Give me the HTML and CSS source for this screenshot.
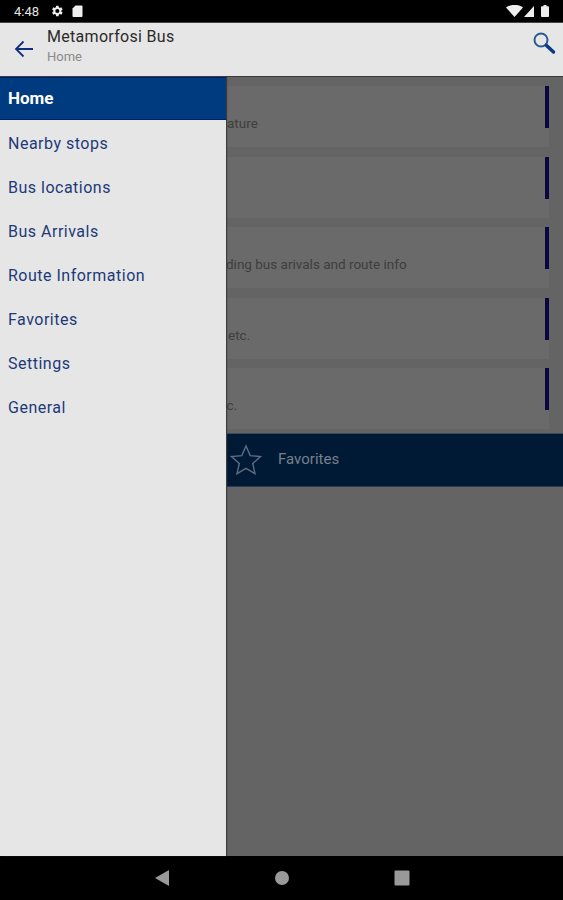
FILE: index.html
```html
<!DOCTYPE html>
<html lang="en">
<head>
  <meta charset="UTF-8" />
  <title>Metamorfosi Bus</title>
  <link rel="stylesheet" href="styles.css">
</head>
<body>
  <div class="status-bar">
    <div class="status-left">
      <span class="clock">4:48</span>
      <svg class="status-gear" width="14" height="14" viewBox="0 0 24 24"><path d="M19.4 13a7.5 7.5 0 0 0 0-2l2.2-1.7-2.1-3.6-2.6 1a7.6 7.6 0 0 0-1.8-1L14.700 3h-4.200l-.4 2.700a7.600 7.600 0 0 0-1.800 1l-2.600-1-2.100 3.600L5.800 11a7.500 7.500 0 0 0 0 2l-2.200 1.700 2.100 3.600 2.600-1a7.600 7.600 0 0 0 1.800 1l.4 2.700h4.200l.4-2.700a7.600 7.600 0 0 0 1.800-1l2.600 1 2.100-3.600zM12.600 15.500a3.500 3.500 0 1 1 0-7 3.500 3.500 0 0 1 0 7z"/></svg>
      <svg class="status-card" width="11" height="12" viewBox="0 0 11 12"><path d="M3.500 0.500H9.500a1 1 0 0 1 1 1v9.500a1 1 0 0 1-1 1h-8a1 1 0 0 1-1-1V3.500z"/></svg>
    </div>
    <div class="status-right">
      <svg width="17" height="12" viewBox="0 0 17 12"><path d="M0 2.500C5-1 12-1 17 2.500L8.500 12z"/></svg>
      <svg width="10" height="11" viewBox="0 0 10 11"><path d="M10 0V11H0z"/></svg>
      <svg class="status-battery" width="8" height="12" viewBox="0 0 8 12"><path d="M2.500 0h3v1.200H7a1 1 0 0 1 1 1V11a1 1 0 0 1-1 1H1a1 1 0 0 1-1-1V2.200a1 1 0 0 1 1-1h1.500z"/></svg>
    </div>
  </div>

  <header class="app-bar">
    <svg class="back-icon" width="20" height="18" viewBox="0 0 20 18"><path d="M19 9H2M9.500 1.500L2 9l7.500 7.500"/></svg>
    <div class="app-title">
      <div class="app-name">Metamorfosi Bus</div>
      <div class="app-page">Home</div>
    </div>
    <svg class="search-icon" width="24" height="24" viewBox="0 0 24 24"><circle cx="9" cy="9" r="6.500"/><path class="search-handle" d="M14.500 14.500L21.500 21"/></svg>
  </header>

  <main class="content">
    <div class="cards">
      <div class="card"><span class="card-text card-first">ature</span><span class="card-bar"></span></div>
      <div class="card"><span class="card-text"></span><span class="card-bar"></span></div>
      <div class="card"><span class="card-text">ding bus arivals and route info</span><span class="card-bar"></span></div>
      <div class="card"><span class="card-text card-etc">etc.</span><span class="card-bar"></span></div>
      <div class="card"><span class="card-text card-last">tc.</span><span class="card-bar"></span></div>
    </div>
    <div class="favorites-bar">
      <svg width="32" height="31" viewBox="0 0 32 31"><path d="M16 2l4.200 9.600 10.300 1-7.800 6.900 2.300 10.200L16 24.400l-9 5.300 2.300-10.200-7.800-6.900 10.300-1z"/></svg>
      <span class="favorites-label">Favorites</span>
    </div>

    <nav class="drawer">
      <div class="drawer-item active">Home</div>
      <div class="drawer-item">Nearby stops</div>
      <div class="drawer-item">Bus locations</div>
      <div class="drawer-item">Bus Arrivals</div>
      <div class="drawer-item">Route Information</div>
      <div class="drawer-item">Favorites</div>
      <div class="drawer-item">Settings</div>
      <div class="drawer-item">General</div>
    </nav>
  </main>

  <footer class="nav-bar">
    <svg width="16" height="18" viewBox="0 0 16 18"><path d="M15 1V17L1 9z"/></svg>
    <svg width="16" height="16" viewBox="0 0 16 16"><circle cx="8" cy="8" r="7"/></svg>
    <svg width="16" height="16" viewBox="0 0 16 16"><rect x="0.500" y="0.500" width="15" height="15" rx="1"/></svg>
  </footer>
</body>
</html>
```

FILE: styles.css
```css
html, body {
  height: 100%;
}

body {
  margin: 0;
  height: 900px;
  overflow: hidden;
  display: flex;
  flex-direction: column;
  font-family: Roboto, "Liberation Sans", sans-serif;
  background: #646464;
}

.status-bar {
  height: 22px;
  flex: none;
  background: #000;
  display: flex;
  justify-content: space-between;
  align-items: center;
  padding: 0 14px;
  color: #e4e4e4;
  border-bottom: 1px solid #444;
}

.status-left, .status-right {
  display: flex;
  align-items: center;
}

.status-left svg, .status-right svg {
  fill: #eee;
}

.clock {
  font-size: 13px;
  width: 36px;
}

.status-gear {
  margin-right: 8px;
}

.status-right svg {
  margin-left: 1px;
}

.status-right .status-battery {
  margin-left: 7px;
}

.app-bar {
  height: 53px;
  flex: none;
  background: #e6e6e6;
  border-bottom: 1px solid #3c3c44;
  display: flex;
  align-items: center;
  padding: 0 7px 0 14px;
}

.back-icon {
  flex: none;
  fill: none;
  stroke: #12307a;
  stroke-width: 1.8;
  margin-top: -1px;
}

.app-title {
  flex: 1;
  margin-left: 13px;
  margin-top: -9px;
}

.app-name {
  font-size: 16px;
  letter-spacing: 0.3px;
  color: #2a2a2a;
}

.app-page {
  font-size: 13px;
  color: #8a8a8a;
  margin-top: 3px;
}

.search-icon {
  flex: none;
  fill: none;
  stroke: #2a5a94;
  stroke-width: 2;
  margin-top: -13px;
}

.search-handle {
  stroke: #0a3a80;
  stroke-width: 3.500;
  stroke-linecap: round;
}

.content {
  flex: 1;
  position: relative;
  padding: 9px 14px 0 0;
}

.cards {
  display: flex;
  flex-direction: column;
  gap: 9.5px;
}

.card {
  height: 61px;
  background: #6a6a6a;
  display: flex;
  justify-content: space-between;
  padding-left: 226px;
  font-size: 13.5px;
  color: #3e3e3e;
}

.card-text {
  margin-top: 29px;
}

.card-first {
  margin-left: 1px;
}

.card-etc {
  margin-left: 2px;
}

.card-last {
  margin-left: -4px;
}

.card-bar {
  width: 4px;
  height: 42px;
  background: #0c0640;
}

.favorites-bar {
  height: 54px;
  margin: 4px -14px 0 0;
  background: #001a35;
  border-top: 1px solid #3a4a5e;
  border-bottom: 1px solid #2a3a55;
  box-sizing: border-box;
  padding-left: 230px;
  display: flex;
  align-items: center;
  color: #77808c;
  font-size: 15px;
}

.favorites-bar svg {
  fill: none;
  stroke: #5d6c80;
  stroke-width: 1.400;
  margin-right: 16px;
  margin-top: -1px;
}

.favorites-label {
  margin-top: -3px;
}

.drawer {
  position: absolute;
  top: 0;
  left: 0;
  bottom: 0;
  width: 226px;
  background: #e6e6e6;
  box-shadow: 1px 0 1px #3c3c3c;
}

.drawer-item {
  height: 44px;
  line-height: 44px;
  padding-left: 8px;
  font-size: 16px;
  letter-spacing: 0.5px;
  color: #1c3a7a;
}

.drawer-item.active {
  height: 43px;
  line-height: 41px;
  margin-bottom: 2px;
  background: #003b80;
  border-top: 1px solid #00206e;
  border-bottom: 1px solid #00206e;
  box-sizing: border-box;
  color: #fff;
  font-weight: bold;
  font-size: 17px;
  letter-spacing: 0;
}

.nav-bar {
  height: 44px;
  flex: none;
  background: #000;
  display: flex;
  align-items: center;
  justify-content: center;
  gap: 104px;
}

.nav-bar svg {
  fill: #999;
}
```
